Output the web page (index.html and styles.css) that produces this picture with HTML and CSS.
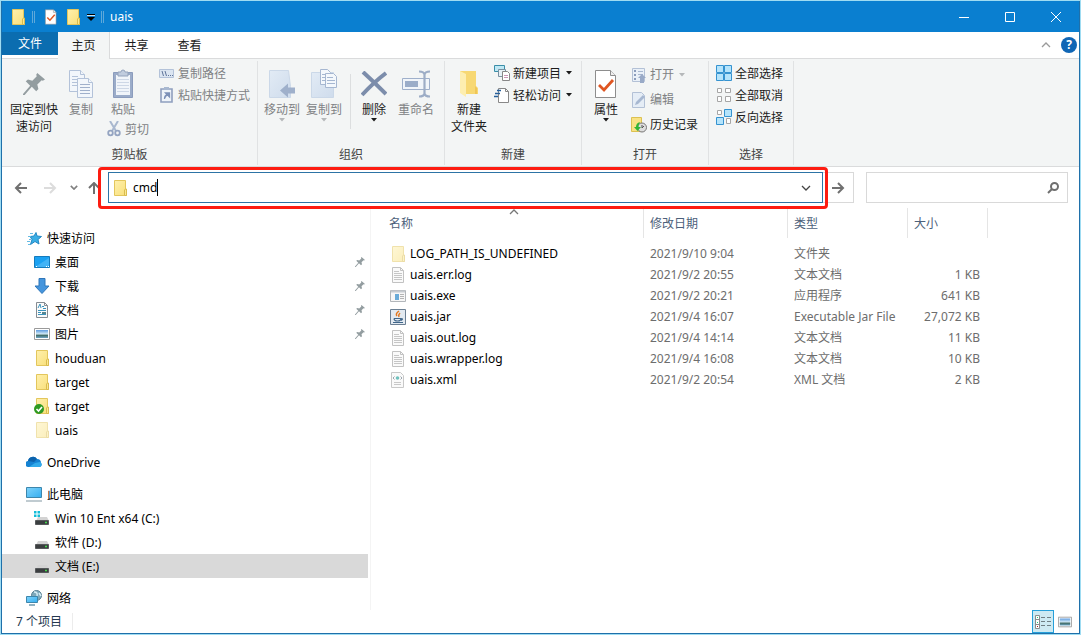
FILE: index.html
```html
<!DOCTYPE html>
<html lang="zh-CN">
<head>
<meta charset="utf-8">
<title>uais</title>
<link rel="stylesheet" href="styles.css">
</head>
<body>
<svg class="defs" aria-hidden="true">
  <defs>
    <linearGradient id="gFolder" x1="0" y1="0" x2="1" y2="1"><stop offset="0" stop-color="#fff0ad"/><stop offset="1" stop-color="#f8df79"/></linearGradient>
    <linearGradient id="gBlue" x1="0" y1="0" x2="1" y2="1"><stop offset="0" stop-color="#e2ebf5"/><stop offset="1" stop-color="#cfdcec"/></linearGradient>
    <linearGradient id="gScreen" x1="0" y1="0" x2="1" y2="1"><stop offset="0" stop-color="#7fd3fb"/><stop offset="1" stop-color="#35aef0"/></linearGradient>
    <linearGradient id="gSky" x1="0" y1="0" x2="0" y2="1"><stop offset="0" stop-color="#5d9be0"/><stop offset=".5" stop-color="#d3eaf6"/><stop offset=".65" stop-color="#3f6a63"/><stop offset="1" stop-color="#6fa6c6"/></linearGradient>
    <symbol id="folder" viewBox="0 0 16 16"><path d="M2.500 .5h11v9h1v6h-12z" fill="url(#gFolder)" stroke="#e3c65c"/><path d="M12.500 15.500v-5.500l1-1h1v6.500z" fill="#fbe890" stroke="#d9bb4f"/></symbol>
    <symbol id="doc" viewBox="0 0 16 16"><path d="M2.500 .5h8l3 3v12h-11z" fill="#fafafa" stroke="#c2c2c2"/><path d="M10.500 .5v3h3" fill="none" stroke="#c2c2c2"/><path d="M4 4.500h5M4 6.500h8M4 8.500h8M4 10.500h8M4 12.500h8" stroke="#c6c6c6"/></symbol>
    <symbol id="checkdoc" viewBox="0 0 24 30"><path d="M1.500 1.500h15l5 5v22h-20z" fill="#fff" stroke="#8d8d8d"/><path d="M16.500 1.500v5h5" fill="#eee" stroke="#8d8d8d"/><path d="M5 16l5 5L19 11" fill="none" stroke="#df5622" stroke-width="2.800"/></symbol>
    <symbol id="pin" viewBox="0 0 20 20"><path d="M13 0l7 6-2 1-1-.5-4 4 1 4-2 2-4-4-6.500 7.500H0V19l6.500-7.500-4-4 2-1.500 4 1 4-4-.5-1.500z" fill="#939da0"/></symbol>
    <symbol id="copy" viewBox="0 0 26 30"><g fill="#f2f6fb" stroke="#b3c2d9"><path d="M1.500 1.500h11l4 4v17h-15z"/><path d="M12.500 1.500v4h4"/><path d="M4 7.500h6M4 10.500h8M4 13.500h8M4 16.500h8"/><path d="M9.500 9.500h11l4 4v15h-15z"/><path d="M20.500 9.500v4h4"/><path d="M12 15.500h10M12 18.500h10M12 21.500h10M12 24.500h10" stroke="#a0b0cb"/></g></symbol>
    <symbol id="paste" viewBox="0 0 22 30"><path d="M1.500 3.500h19v25h-19z" fill="#9bacc9" stroke="#8b9cbd"/><path d="M4 6h14v20H4z" fill="#f1f5fa"/><path d="M5 10.500h12M5 13.500h12M5 16.500h12M5 19.500h12M5 22.500h12" stroke="#cdd7e6"/><path d="M6 3h3a2 2 0 0 1 4 0h3v4H6z" fill="#c0ccde" stroke="#94a3bc"/></symbol>
    <symbol id="cut" viewBox="0 0 14 16"><path d="M3 0l6 10M11 0L5 10" stroke="#a9b8cf" stroke-width="2"/><circle cx="3.500" cy="12" r="2.300" fill="none" stroke="#94a4c1" stroke-width="1.800"/><circle cx="10.500" cy="12" r="2.300" fill="none" stroke="#94a4c1" stroke-width="1.800"/></symbol>
    <symbol id="path" viewBox="0 0 16 16"><path d="M.5 4.500h14v8H.5z" fill="#dbe5f1" stroke="#b3c2d9"/><path d="M3 6l1.500 5M6 6l1.500 5M9 10.500h1M11 10.500h1M13 10.500h1" stroke="#5f7499"/></symbol>
    <symbol id="shortcut" viewBox="0 0 16 16"><path d="M2 2h11v13H2z" fill="#eff4fa" stroke="#8f9fbe" stroke-width="1.600"/><path d="M5 0h5v3H5z" fill="#a8b8d0"/><path d="M5.500 12c0-3 1-4 3-4M6.500 6h4v4z" fill="#7d91b8" stroke="#7d91b8" stroke-width="1.300"/></symbol>
    <symbol id="moveto" viewBox="0 0 28 30"><path d="M1.500 1.500h19l2 16v11h-21z" fill="url(#gBlue)" stroke="#cbd8e8"/><path d="M27 18.500v6h-7v4l-8-7 8-7v4z" fill="#9fb0cb"/></symbol>
    <symbol id="copyto" viewBox="0 0 28 30"><path d="M1.500 3.500h22v25h-22z" fill="url(#gBlue)" stroke="#cbd8e8"/><g fill="#f4f8fc" stroke="#a6b7d1"><path d="M10.500 .5h7l3 3v12h-10z"/><path d="M12 5.500h6M12 8.500h6M12 11.500h6"/><path d="M15.500 4.500h8l3 3v11h-11z"/><path d="M17 8.500h6M17 11.500h8M17 14.500h8"/></g></symbol>
    <symbol id="delete" viewBox="0 0 26 26"><path d="M2 1Q13 11 25 23M25 2Q13 11 1 24" fill="none" stroke="#7c8dab" stroke-width="4"/></symbol>
    <symbol id="rename" viewBox="0 0 28 28"><path d="M.5 8.500h27v11H.5z" fill="#f1f5fa" stroke="#9fb0cb"/><path d="M3 11h13v6H3z" fill="#9badc9"/><path d="M17 1.500q5 0 5.500 3q.5-3 5.500-3M22.500 3v22M17 26.500q5 0 5.500-3q.5 3 5.500 3" fill="none" stroke="#9dadc6" stroke-width="2.200"/></symbol>
    <symbol id="newfolder" viewBox="0 0 20 28"><path d="M1 1h8v22H1zM9 1h8v15l2 2v6H6z" fill="#f7d873"/><path d="M1 1l6 3v23l-6-4z" fill="#fdeeb0"/><path d="M16 16l2 2v6h-2z" fill="#efc658"/></symbol>
    <symbol id="newitem" viewBox="0 0 16 16"><path d="M.5 .5h10v6H.5z" fill="#bfe8f4" stroke="#3b8ea8"/><path d="M4.500 4.500h7v7h-7z" fill="#e7f1f7" stroke="#7990a0"/><path d="M8.500 6.500h5l2 2v7h-7z" fill="#fff" stroke="#888"/><path d="M10 10.500h4M10 12.500h4" stroke="#c997b7"/></symbol>
    <symbol id="easy" viewBox="0 0 16 16"><path d="M4.500 1.500h7l3 3v11h-10z" fill="#fff" stroke="#888"/><path d="M11.500 1.500v3h3" fill="none" stroke="#888"/><path d="M3 3.500h4M1 6.500h5M0 9.500h4" stroke="#255f9b" stroke-width="1.600"/></symbol>
    <symbol id="open" viewBox="0 0 16 16"><path d="M1.500 1.500h12v13h-12z" fill="#e9f0f8" stroke="#b3c1d6"/><path d="M3 3h2v2H3zM3 7h2v2H3zM3 11h2v2H3z" fill="#8b9dbc"/><path d="M7 4.500h5M7 7.500h5" stroke="#a7b7cf"/><path d="M11 7l4 4h-2v5H9v-5H7z" fill="#99aac7"/></symbol>
    <symbol id="edit" viewBox="0 0 16 16"><path d="M1.500 .5h9l3 3v12h-12z" fill="#e5edf6" stroke="#b3c1d6"/><path d="M4 13l1-3 7-7 2 2-7 7z" fill="#a7b8d1"/></symbol>
    <symbol id="history" viewBox="0 0 16 16"><path d="M.5 .5h10v14H.5z" fill="#f9e284" stroke="#dcc152"/><circle cx="11" cy="10.500" r="4.500" fill="#dedede" stroke="#777"/><path d="M11 8v3l2-2" fill="none" stroke="#555"/><path d="M9 5q-4 1-4 5H3l3.500 4L10 10H7.500q0-2.500 1.500-5z" fill="#32b536"/></symbol>
    <symbol id="selall" viewBox="0 0 16 16"><path d="M.5 .5h7v7h-7zM8.500 .5h7v7h-7zM.5 8.500h7v7h-7zM8.500 8.500h7v7h-7z" fill="#b5e4fb" stroke="#3593d0"/></symbol>
    <symbol id="selnone" viewBox="0 0 16 16"><path d="M1.500 1.500h4v4h-4zM9.500 1.500h5v4h-5zM1.500 9.500h4v5h-4zM9.500 9.500h5v5h-5z" fill="#fff" stroke="#a6a6a6"/></symbol>
    <symbol id="selinv" viewBox="0 0 16 16"><path d="M1.500 1.500h4v4h-4zM10.500 9.500h4v5h-4z" fill="#fff" stroke="#a6a6a6"/><path d="M8.500 .5h7v7h-7zM.5 8.500h7v7h-7z" fill="#b5e4fb" stroke="#3593d0"/></symbol>
    <symbol id="star" viewBox="0 0 16 16"><path d="M10 2.500l1 3.500 4.500.5-3.500 3 1 4.500-4-2.500-4.500 3 1.500-5-2-3 4-.5z" fill="#39aee5" stroke="#2388c4"/><path d="M4 3.500h3M2 6.500h3M3 9.500h2M1 11.500h3M2 14.500h2" stroke="#64bbe4"/></symbol>
    <symbol id="desktop" viewBox="0 0 16 16"><path d="M.5 2.500h15v11H.5z" fill="#1ba1f2" stroke="#157bbd"/><path d="M1 13L15 4v9z" fill="#42b3f6"/><path d="M2 12.500h1M12 12.500h1M14 12.500h1" stroke="#fff"/></symbol>
    <symbol id="download" viewBox="0 0 16 16"><path d="M5 .5h6V8h4L8 15.500 1 8h4z" fill="#4595dd" stroke="#2f76b9"/></symbol>
    <symbol id="docs" viewBox="0 0 16 16"><path d="M2.500 .5h8l3 3v12h-11z" fill="#fafafa" stroke="#858c92"/><path d="M10.500 .5v3h3" fill="none" stroke="#858c92"/><path d="M4 6l2-4 1 4M8 4.500h2M4 8.500h8M4 10.500h3M4 12.500h8M9 6.500h3" fill="none" stroke="#3a93bc"/><path d="M8 10h4v2H8z" fill="#57858f"/></symbol>
    <symbol id="picture" viewBox="0 0 16 16"><path d="M.5 2.500h15v11H.5z" fill="#fff" stroke="#9a9a9a"/><path d="M2 4h12v8H2z" fill="url(#gSky)"/></symbol>
    <symbol id="cloud" viewBox="0 0 16 16"><path d="M3 13a3 3 0 0 1-1-6 5 5 0 0 1 9-2 4 4 0 0 1 4 4 2.500 2.500 0 0 1-1 4z" fill="#1582d2"/><path d="M2 7a5 5 0 0 1 9-2L8 8z" fill="#0c62ac"/><path d="M3 13l6-4 5-1a2.700 2.700 0 0 1 0 5z" fill="#31aaea"/></symbol>
    <symbol id="pc" viewBox="0 0 16 16"><path d="M.5 1.500h15v10H.5z" fill="url(#gScreen)" stroke="#3d86ac"/><path d="M2 13.500h12" stroke="#fff"/><path d="M0 15h16" stroke="#8197a2"/></symbol>
    <symbol id="drive" viewBox="0 0 16 16"><path d="M4 7h9l2 4H2z" fill="#d3d3d3"/><path d="M1.500 10.500h13v4h-13z" fill="#3b3e40" stroke="#56595b"/><path d="M11 12.500h2" stroke="#45d94c" stroke-width="1.500"/></symbol>
    <symbol id="sysdrive" viewBox="0 0 16 16"><use href="#drive"/><path d="M0 1h2.500v2.500H0zM3.500 1H6v2.500H3.500zM0 4.500h2.500V7H0zM3.500 4.500H6V7H3.500z" fill="#12bcd8"/></symbol>
    <symbol id="network" viewBox="0 0 16 16"><circle cx="10.500" cy="5.500" r="5" fill="#7fa9bb" stroke="#577f92"/><path d="M8 2q4 0 3 4M13 3l2 3" fill="none" stroke="#d6edf5" stroke-width="1.500"/><path d="M.5 6.500h11v6H.5z" fill="url(#gScreen)" stroke="#3d86ac"/><path d="M3 15h6" stroke="#6c99ae" stroke-width="1.500"/></symbol>
    <symbol id="exe" viewBox="0 0 16 16"><path d="M.5 2.500h15v11H.5z" fill="#f7f7f7" stroke="#b2b6ba"/><path d="M1 3.500h14" stroke="#c6cbd0" stroke-width="2"/><path d="M5 6h4v6H5z" fill="#6aabd8"/><path d="M10 6.500h4M10 8.500h4M10 10.500h4" stroke="#b4b4b4"/></symbol>
    <symbol id="jar" viewBox="0 0 16 16"><path d="M.5 .5h15v15H.5z" fill="#e3eaf1" stroke="#6b7f93"/><path d="M9 2q-4 3-2 5M10 4q-2 2-1 4" fill="none" stroke="#e37920" stroke-width="1.500"/><path d="M4 9.500h7q0 2.500-3.500 2.500T4 9.500M11 9.500q3 0 0 2M3 13.500h10" fill="none" stroke="#40668a" stroke-width="1.200"/></symbol>
    <symbol id="xml" viewBox="0 0 16 16"><path d="M1.500 .5h9l3 3v12h-12z" fill="#fafafa" stroke="#c8c8c8"/><path d="M4.500 4.500L3 6l1.500 1.500M10.500 4.500L12 6l-1.500 1.500" fill="none" stroke="#9aa6af"/><circle cx="7.500" cy="6" r="1.800" fill="#6fc1bd"/><path d="M4 10.500h7M4 12.500h7" stroke="#c8c8c8"/></symbol>
    <symbol id="down" viewBox="0 0 8 4"><path d="M1 0h6L4 3.500z" fill="currentColor"/></symbol>
    <symbol id="chevron" viewBox="0 0 10 6"><path d="M1 1l4 4 4-4" fill="none" stroke="currentColor" stroke-width="1.300"/></symbol>
  </defs>
</svg>

<div class="window">
  <header class="titlebar">
    <svg class="i16"><use href="#folder"/></svg>
    <span class="tick"></span>
    <button class="bare" aria-label="属性"><svg class="i16"><use href="#checkdoc"/></svg></button>
    <button class="bare" aria-label="新建文件夹"><svg class="i16"><use href="#folder"/></svg></button>
    <button class="bare qat" aria-label="自定义快速访问工具栏"><svg class="qatmark" viewBox="0 0 8 8"><path d="M0 1.500h8" stroke="#000"/><path d="M0 2.500h8" stroke="#cfe6f6"/><path d="M0 4h8L4 8z" fill="#000"/></svg></button>
    <span class="tick"></span>
    <h1 class="title">uais</h1>
    <div class="controls">
      <button class="ctl" aria-label="最小化"><svg viewBox="0 0 10 10"><path d="M0 5.500h10"/></svg></button>
      <button class="ctl" aria-label="最大化"><svg viewBox="0 0 10 10"><path d="M.5 .5h9v9h-9z"/></svg></button>
      <button class="ctl" aria-label="关闭"><svg viewBox="0 0 10 10"><path d="M0 0l10 10M10 0L0 10"/></svg></button>
    </div>
  </header>

  <nav class="tabs">
    <button class="tab file">文件</button>
    <button class="tab active">主页</button>
    <button class="tab">共享</button>
    <button class="tab">查看</button>
    <span class="tabtools">
      <button class="bare collapse" aria-label="最小化功能区"><svg class="chev up"><use href="#chevron"/></svg></button>
      <button class="help" aria-label="帮助">?</button>
    </span>
  </nav>

  <div class="ribbon">
    <section class="group g-clip">
      <div class="tools">
        <button class="big w56"><span class="pic"><svg class="s22"><use href="#pin"/></svg></span>固定到快<br>速访问</button>
        <button class="big w38 off"><span class="pic"><svg class="s30"><use href="#copy"/></svg></span>复制</button>
        <div class="stack">
          <button class="big w46 off"><span class="pic"><svg class="s30"><use href="#paste"/></svg></span>粘贴</button>
          <button class="small off cutrow"><svg class="i16"><use href="#cut"/></svg>剪切</button>
        </div>
        <div class="stack">
          <button class="small off"><svg class="i16"><use href="#path"/></svg>复制路径</button>
          <button class="small off"><svg class="i16"><use href="#shortcut"/></svg>粘贴快捷方式</button>
        </div>
      </div>
      <h2 class="caption">剪贴板</h2>
    </section>
    <section class="group g-org">
      <div class="tools">
        <button class="big w42 off"><span class="pic"><svg class="s30"><use href="#moveto"/></svg></span>移动到<svg class="arrow"><use href="#down"/></svg></button>
        <button class="big w42 off"><span class="pic"><svg class="s30"><use href="#copyto"/></svg></span>复制到<svg class="arrow"><use href="#down"/></svg></button>
        <span class="rule"></span>
        <button class="big w38"><span class="pic"><svg class="s26"><use href="#delete"/></svg></span>删除<svg class="arrow"><use href="#down"/></svg></button>
        <button class="big w46 off"><span class="pic"><svg class="s28"><use href="#rename"/></svg></span>重命名</button>
      </div>
      <h2 class="caption">组织</h2>
    </section>
    <section class="group g-new">
      <div class="tools">
        <button class="big w46"><span class="pic"><svg class="s28"><use href="#newfolder"/></svg></span>新建<br>文件夹</button>
        <div class="stack">
          <button class="small"><svg class="i16"><use href="#newitem"/></svg>新建项目<svg class="arrow"><use href="#down"/></svg></button>
          <button class="small"><svg class="i16"><use href="#easy"/></svg>轻松访问<svg class="arrow"><use href="#down"/></svg></button>
        </div>
      </div>
      <h2 class="caption">新建</h2>
    </section>
    <section class="group g-open">
      <div class="tools">
        <button class="big w42"><span class="pic"><svg class="s30"><use href="#checkdoc"/></svg></span>属性<svg class="arrow"><use href="#down"/></svg></button>
        <div class="stack roomy">
          <button class="small off"><svg class="i16"><use href="#open"/></svg>打开<svg class="arrow"><use href="#down"/></svg></button>
          <button class="small off"><svg class="i16"><use href="#edit"/></svg>编辑</button>
          <button class="small"><svg class="i16"><use href="#history"/></svg>历史记录</button>
        </div>
      </div>
      <h2 class="caption">打开</h2>
    </section>
    <section class="group g-sel">
      <div class="tools">
        <div class="stack">
          <button class="small"><svg class="i16"><use href="#selall"/></svg>全部选择</button>
          <button class="small"><svg class="i16"><use href="#selnone"/></svg>全部取消</button>
          <button class="small"><svg class="i16"><use href="#selinv"/></svg>反向选择</button>
        </div>
      </div>
      <h2 class="caption">选择</h2>
    </section>
  </div>

  <div class="navbar">
    <div class="history">
      <button class="bare go1" aria-label="后退"><svg class="nav14" viewBox="0 0 14 12"><path d="M7 1L2 6l5 5M2 6h11"/></svg></button>
      <button class="bare go1 dim" aria-label="前进"><svg class="nav14" viewBox="0 0 14 12"><path d="M7 1l5 5-5 5M12 6H1"/></svg></button>
      <button class="bare recent" aria-label="最近浏览的位置"><svg class="chev" viewBox="0 0 10 6"><path d="M1 1l4 4 4-4" fill="none" stroke="currentColor" stroke-width="2"/></svg></button>
      <button class="bare upbtn" aria-label="向上"><svg class="nav14" viewBox="0 0 14 12"><path d="M2 6l5-5 5 5M7 1v11"/></svg></button>
    </div>
    <div class="address">
      <svg class="i16"><use href="#folder"/></svg>
      <input class="path" type="text" aria-label="地址" value="cmd">
      <span class="caret"></span>
      <button class="bare drop" aria-label="以前的位置"><svg class="chev"><use href="#chevron"/></svg></button>
      <span class="highlight"></span>
    </div>
    <button class="goto" aria-label="转到"><svg class="nav14" viewBox="0 0 14 12"><path d="M7 1l5 5-5 5M12 6H1"/></svg></button>
    <div class="search">
      <input type="search" aria-label="搜索">
      <svg class="lens" viewBox="0 0 12 12"><circle cx="7.500" cy="4.500" r="3.500"/><path d="M5 7L1 11"/></svg>
    </div>
  </div>

  <div class="body">
    <nav class="tree">
      <a class="node root" href="#"><svg class="i16"><use href="#star"/></svg>快速访问</a>
      <a class="node" href="#"><svg class="i16"><use href="#desktop"/></svg>桌面<svg class="pinned"><use href="#pin"/></svg></a>
      <a class="node" href="#"><svg class="i16"><use href="#download"/></svg>下载<svg class="pinned"><use href="#pin"/></svg></a>
      <a class="node" href="#"><svg class="i16"><use href="#docs"/></svg>文档<svg class="pinned"><use href="#pin"/></svg></a>
      <a class="node" href="#"><svg class="i16"><use href="#picture"/></svg>图片<svg class="pinned"><use href="#pin"/></svg></a>
      <a class="node" href="#"><svg class="i16"><use href="#folder"/></svg>houduan</a>
      <a class="node" href="#"><svg class="i16"><use href="#folder"/></svg>target</a>
      <a class="node" href="#"><svg class="i16" viewBox="0 0 16 16"><use href="#folder"/><circle cx="5" cy="11" r="5" fill="#2f9a22"/><path d="M2.500 11l2 2 3.500-4" fill="none" stroke="#fff" stroke-width="1.600"/></svg>target</a>
      <a class="node" href="#"><svg class="i16 faded"><use href="#folder"/></svg>uais</a>
      <a class="node root spaced" href="#"><svg class="i16"><use href="#cloud"/></svg>OneDrive</a>
      <a class="node root spaced" href="#"><svg class="i16"><use href="#pc"/></svg>此电脑</a>
      <a class="node" href="#"><svg class="i16"><use href="#sysdrive"/></svg>Win 10 Ent x64 (C:)</a>
      <a class="node" href="#"><svg class="i16"><use href="#drive"/></svg>软件 (D:)</a>
      <a class="node selected" href="#"><svg class="i16"><use href="#drive"/></svg>文档 (E:)</a>
      <a class="node root spaced" href="#"><svg class="i16"><use href="#network"/></svg>网络</a>
    </nav>
    <main class="files">
      <svg class="chev up sort"><use href="#chevron"/></svg>
      <table>
        <colgroup><col class="c-name"><col class="c-date"><col class="c-type"><col class="c-size"></colgroup>
        <thead><tr><th>名称</th><th>修改日期</th><th>类型</th><th>大小</th></tr></thead>
        <tbody>
          <tr><td><span class="cell"><svg class="i16 faded"><use href="#folder"/></svg>LOG_PATH_IS_UNDEFINED</span></td><td>2021/9/10 9:04</td><td>文件夹</td><td></td></tr>
          <tr><td><span class="cell"><svg class="i16"><use href="#doc"/></svg>uais.err.log</span></td><td>2021/9/2 20:55</td><td>文本文档</td><td>1 KB</td></tr>
          <tr><td><span class="cell"><svg class="i16"><use href="#exe"/></svg>uais.exe</span></td><td>2021/9/2 20:21</td><td>应用程序</td><td>641 KB</td></tr>
          <tr><td><span class="cell"><svg class="i16"><use href="#jar"/></svg>uais.jar</span></td><td>2021/9/4 16:07</td><td>Executable Jar File</td><td>27,072 KB</td></tr>
          <tr><td><span class="cell"><svg class="i16"><use href="#doc"/></svg>uais.out.log</span></td><td>2021/9/4 14:14</td><td>文本文档</td><td>11 KB</td></tr>
          <tr><td><span class="cell"><svg class="i16"><use href="#doc"/></svg>uais.wrapper.log</span></td><td>2021/9/4 16:08</td><td>文本文档</td><td>10 KB</td></tr>
          <tr><td><span class="cell"><svg class="i16"><use href="#xml"/></svg>uais.xml</span></td><td>2021/9/2 20:54</td><td>XML 文档</td><td>2 KB</td></tr>
        </tbody>
      </table>
    </main>
  </div>

  <footer class="status">
    <span class="count">7 个项目</span>
    <span class="views">
      <button class="view on" aria-label="详细信息"><svg class="viewicon" viewBox="0 0 16 14"><path d="M.5 .5h4v13h-4z" fill="#fff" stroke="#8c8c8c"/><path d="M1 4.500h3M1 9.500h3" stroke="#8c8c8c"/><path d="M2 2h1v1H2zM2 7h1v1H2z" fill="#2c7"/><path d="M2 11h1v1H2z" fill="#a22"/><path d="M6 2.500h4M12 2.500h4M6 6.500h4M12 6.500h4M6 10.500h4M12 10.500h4" stroke="#6f7f85"/></svg></button>
      <button class="view" aria-label="大图标"><svg class="thumb"><use href="#picture"/></svg></button>
    </span>
  </footer>
</div>
</body>
</html>
```
FILE: styles.css
```css
* { box-sizing: border-box; }
body {
  margin: 0;
  padding: 1px;
  min-height: 100vh;
  display: flex;
  background: #9fdcf2;
  color: #1b1b1b;
  font: 12px/17px "Noto Sans", "Noto Sans CJK SC", sans-serif;
}
button, input { font: inherit; color: inherit; }
button { background: none; border: 0; padding: 0; }
svg { display: block; flex: none; }
.defs { position: absolute; width: 0; height: 0; }
.i16 { width: 16px; height: 16px; }
.faded { opacity: .5; }
.bare { display: flex; align-items: center; justify-content: center; }
.window {
  flex: 1;
  display: flex;
  flex-direction: column;
  min-width: 0;
  background: #fff;
  border: 1px solid #1f70aa;
  border-top: 0;
}

.titlebar {
  display: flex;
  align-items: center;
  height: 31px;
  padding-left: 8px;
  background: #0a7fd0;
}
.tick { width: 3px; height: 12px; margin: 0 8px 0 6px; border: 1px solid #5fa9da; border-width: 0 1px; }
.titlebar .bare + .bare { margin-left: 6px; }
.qatmark { width: 8px; height: 8px; }
.titlebar .qat + .tick { margin-right: 6px; }
.title { margin: 0; font-size: 12px; font-weight: 400; color: #fff; }
.controls { display: flex; margin-left: auto; align-self: stretch; }
.ctl { width: 46px; display: flex; align-items: center; justify-content: center; }
.ctl svg { width: 10px; height: 10px; fill: none; stroke: #fff; overflow: visible; }

.tabs { display: flex; height: 27px; border-bottom: 1px solid #dadbdc; }
.tab { width: 53px; height: 26px; }
.tab.file { width: 56px; height: 23px; background: #0b6db0; color: #fff; }
.tab.active { width: 52px; height: 27px; background: #f3f5f5; border-right: 1px solid #dadbdc; }
.tabtools { display: flex; align-items: center; gap: 10px; margin-left: auto; padding-right: 2px; }
.collapse { color: #9a9a9a; }
.chev { width: 10px; height: 6px; }
.up { transform: rotate(180deg); }
.help { width: 16px; height: 16px; border-radius: 8px; background: #1066b5; color: #fff; font-weight: 700; line-height: 16px; }

.ribbon { display: flex; height: 108px; background: #f3f5f5; border-bottom: 1px solid #dadbdc; }
.group { display: flex; flex-direction: column; border-right: 1px solid #e0e2e3; margin: 2px 0 1px; }
.g-clip { width: 256px; }
.g-org { width: 187px; }
.g-new { width: 137px; }
.g-open { width: 127px; }
.g-sel { width: 85px; }
.tools { display: flex; flex: 1; align-items: flex-start; padding: 1px 0 0 3px; }
.g-clip .tools { padding-left: 4px; }
.g-new .tools { padding-left: 1px; }
.caption { margin: 0; height: 19px; font-size: 12px; font-weight: 400; line-height: 17px; text-align: center; color: #444; }
.stack { display: flex; flex-direction: column; align-items: flex-start; }
.big { display: flex; flex-direction: column; align-items: center; line-height: 17px; white-space: nowrap; padding-top: 4px; }
.pic { height: 35px; display: flex; align-items: center; }
.w56 { width: 56px; }
.w38 { width: 38px; }
.w42 { width: 42px; }
.w46 { width: 46px; }
.s22 { width: 22px; height: 22px; }
.s26 { width: 26px; height: 26px; }
.s28 { width: 28px; height: 28px; }
.s30 { width: 30px; height: 30px; }
.arrow { width: 8px; height: 4px; }
.small { display: flex; align-items: center; gap: 3px; height: 22px; white-space: nowrap; }
.small .arrow { margin-left: 1px; }
.cutrow { margin-left: 6px; }
.roomy .small { height: 25px; }
.g-clip .stack:last-child { margin-left: 10px; }
.g-new .stack { margin-left: 2px; }
.g-open .stack { margin-left: 4px; }
.g-sel .stack { margin-left: 4px; }
.off { color: #808284; }
.off .arrow { color: #b5b8ba; }
.rule { width: 1px; height: 55px; margin: 12px 4px 0 5px; background: #dcdedf; }

.navbar { display: flex; align-items: center; height: 41px; padding-right: 11px; }
.history { display: flex; width: 106px; padding-left: 12px; align-items: center; }
.nav14 { width: 14px; height: 12px; fill: none; stroke: #707070; stroke-width: 2; }
.go1 { width: 14px; margin-right: 15px; }
.dim { margin-right: 12px; }
.dim .nav14 { stroke: #dcdcdc; }
.recent { width: 10px; margin-right: 8px; color: #808080; }
.recent .chev { width: 8px; height: 5px; }
.address {
  position: relative;
  display: flex;
  align-items: center;
  flex: 1;
  height: 31px;
  padding-left: 3px;
  border: 1px solid #2d74a6;
}
.path { field-sizing: content; border: 0; outline: 0; padding: 0; margin-left: 5px; height: 20px; background: none; color: #000; }
.caret { width: 1px; height: 17px; background: #000; }
.drop { margin-left: auto; width: 32px; height: 29px; color: #444; }
.highlight { position: absolute; inset: -6px -6px -7px -11px; border: 3px solid #fd1c11; border-radius: 4px; pointer-events: none; z-index: 1; }
.goto { width: 31px; height: 31px; display: flex; align-items: center; justify-content: center; border: 1px solid #d9d9d9; border-left: 0; }
.search { display: flex; align-items: center; width: 202px; height: 31px; margin-left: 12px; padding-right: 8px; border: 1px solid #d9d9d9; }
.search input { flex: 1; min-width: 0; border: 0; outline: 0; background: none; }
.lens { width: 12px; height: 12px; fill: none; stroke: #6f6f6f; stroke-width: 2; }

.body { display: flex; flex: 1; }
.tree { width: 369px; padding-top: 18px; border-right: 1px solid #f4f4f4; }
.node { display: flex; align-items: center; gap: 5px; height: 24px; padding: 0 3px 0 32px; margin-right: 2px; color: #000; text-decoration: none; }
.root { padding-left: 24px; }
.spaced { margin-top: 8px; }
.selected { background: #d9d9d9; }
.pinned { width: 10px; height: 10px; margin-left: auto; }
.files { position: relative; flex: 1; padding-left: 9px; }
.sort { position: absolute; left: 138px; top: 1px; color: #777; }
table { width: 608px; table-layout: fixed; border-collapse: separate; border-spacing: 0; }
.c-name { width: 264px; }
.c-date { width: 144px; }
.c-type { width: 120px; }
.c-size { width: 80px; }
th { height: 30px; padding: 0 0 0 6px; border-right: 1px solid #e5e5e5; font-weight: 400; text-align: left; color: #4c607a; }
th:first-child { padding-left: 9px; }
tbody::before { content: ""; display: block; height: 5px; }
td { height: 21px; padding: 0 0 0 6px; white-space: nowrap; color: #6d6d6d; }
td:first-child { padding-left: 10px; color: #000; }
td:last-child { padding-right: 8px; text-align: right; }
.cell { display: flex; align-items: center; gap: 4px; }

.status { display: flex; align-items: center; height: 23px; color: #24384f; }
.count { padding: 0 10px 0 14px; border-right: 1px solid #ececec; }
.views { display: flex; margin-left: auto; align-self: stretch; padding-right: 3px; }
.view { width: 22px; display: flex; align-items: center; justify-content: center; }
.on { background: #cdeaf3; border: 1px solid #26a0da; }
.viewicon { width: 16px; height: 14px; }
.thumb { width: 14px; height: 14px; }
```
